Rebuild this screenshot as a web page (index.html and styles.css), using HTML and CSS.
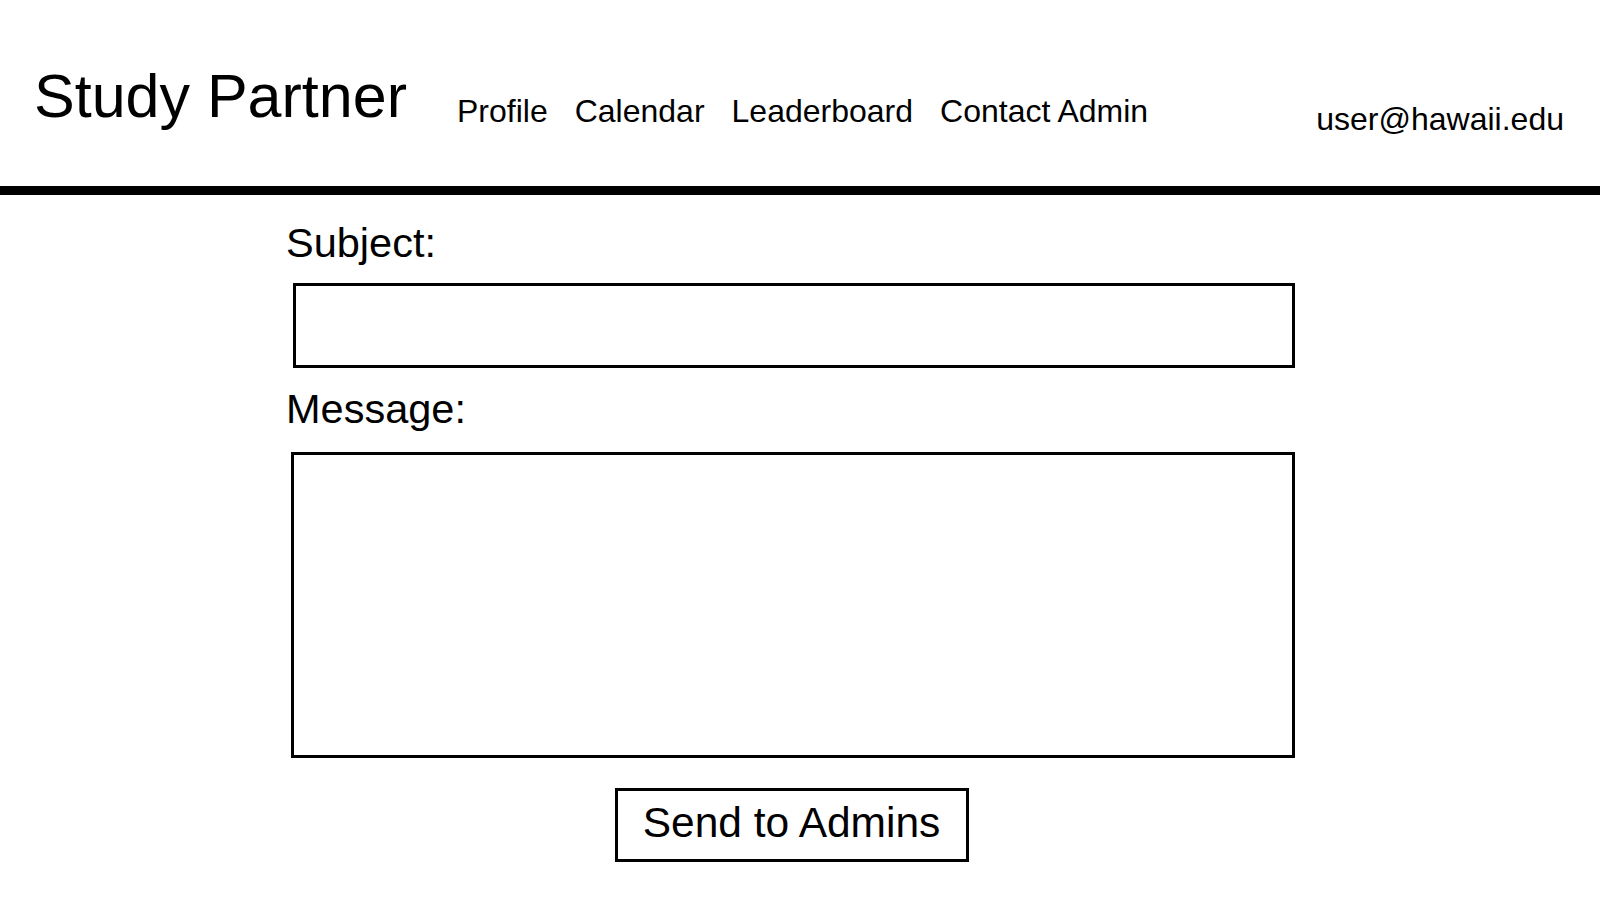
FILE: index.html
```html
<!DOCTYPE html>
<html lang="en">
<head>
<meta charset="utf-8">
<title>Study Partner - Contact Admin</title>
<link rel="stylesheet" href="styles.css">
</head>
<body>
<header class="topbar">
  <div class="brand">Study Partner</div>
  <nav class="nav">
    <a class="nav-link" href="#">Profile</a>
    <a class="nav-link" href="#">Calendar</a>
    <a class="nav-link" href="#">Leaderboard</a>
    <a class="nav-link" href="#">Contact Admin</a>
  </nav>
  <div class="user">user@hawaii.edu</div>
</header>
<main class="form">
  <label class="label label-subject" for="subject">Subject:</label>
  <input class="field field-subject" id="subject" type="text">
  <label class="label label-message" for="message">Message:</label>
  <textarea class="field field-message" id="message"></textarea>
  <div class="actions">
    <button class="send" type="button">Send to Admins</button>
  </div>
</main>
</body>
</html>
```
FILE: styles.css
```css
html, body {
  margin: 0;
  padding: 0;
  background: #fff;
}
body {
  font-family: "Liberation Sans", Arial, sans-serif;
  color: #000;
}
.topbar {
  display: flex;
  align-items: flex-start;
  box-sizing: content-box;
  height: 120px;
  padding: 66px 36px 0 34px;
  border-bottom: 9px solid #000;
}
.brand {
  font-size: 61px;
  line-height: 60px;
}
.nav {
  display: flex;
  gap: 27px;
  margin-left: 50px;
  margin-top: 30px;
}
.nav-link {
  font-size: 32px;
  line-height: 31px;
  color: #000;
  text-decoration: none;
}
.user {
  margin-left: auto;
  margin-top: 37px;
  font-size: 32px;
  line-height: 32px;
}
.form {
  display: flex;
  flex-direction: column;
  align-items: flex-start;
  width: 1009px;
  margin-left: 286px;
  padding-top: 28px;
}
.label {
  font-size: 41.5px;
  line-height: 40px;
}
.field {
  box-sizing: border-box;
  border: 3px solid #000;
  border-radius: 0;
  background: #fff;
  outline: none;
  padding: 0;
  font-family: inherit;
  resize: none;
}
.field-subject {
  margin-top: 20px;
  margin-left: 7px;
  width: 1002px;
  height: 85px;
}
.label-message {
  margin-top: 21px;
}
.field-message {
  display: block;
  margin-top: 23px;
  margin-left: 5px;
  width: 1004px;
  height: 306px;
}
.actions {
  align-self: stretch;
  display: flex;
  justify-content: center;
  padding-left: 2px;
  margin-top: 30px;
}
.send {
  box-sizing: border-box;
  width: 354px;
  height: 74px;
  padding: 10px 0 14px;
  border: 3px solid #000;
  border-radius: 0;
  background: #fff;
  font-family: inherit;
  font-size: 42.5px;
  line-height: 42px;
  color: #000;
  text-align: center;
}
```
